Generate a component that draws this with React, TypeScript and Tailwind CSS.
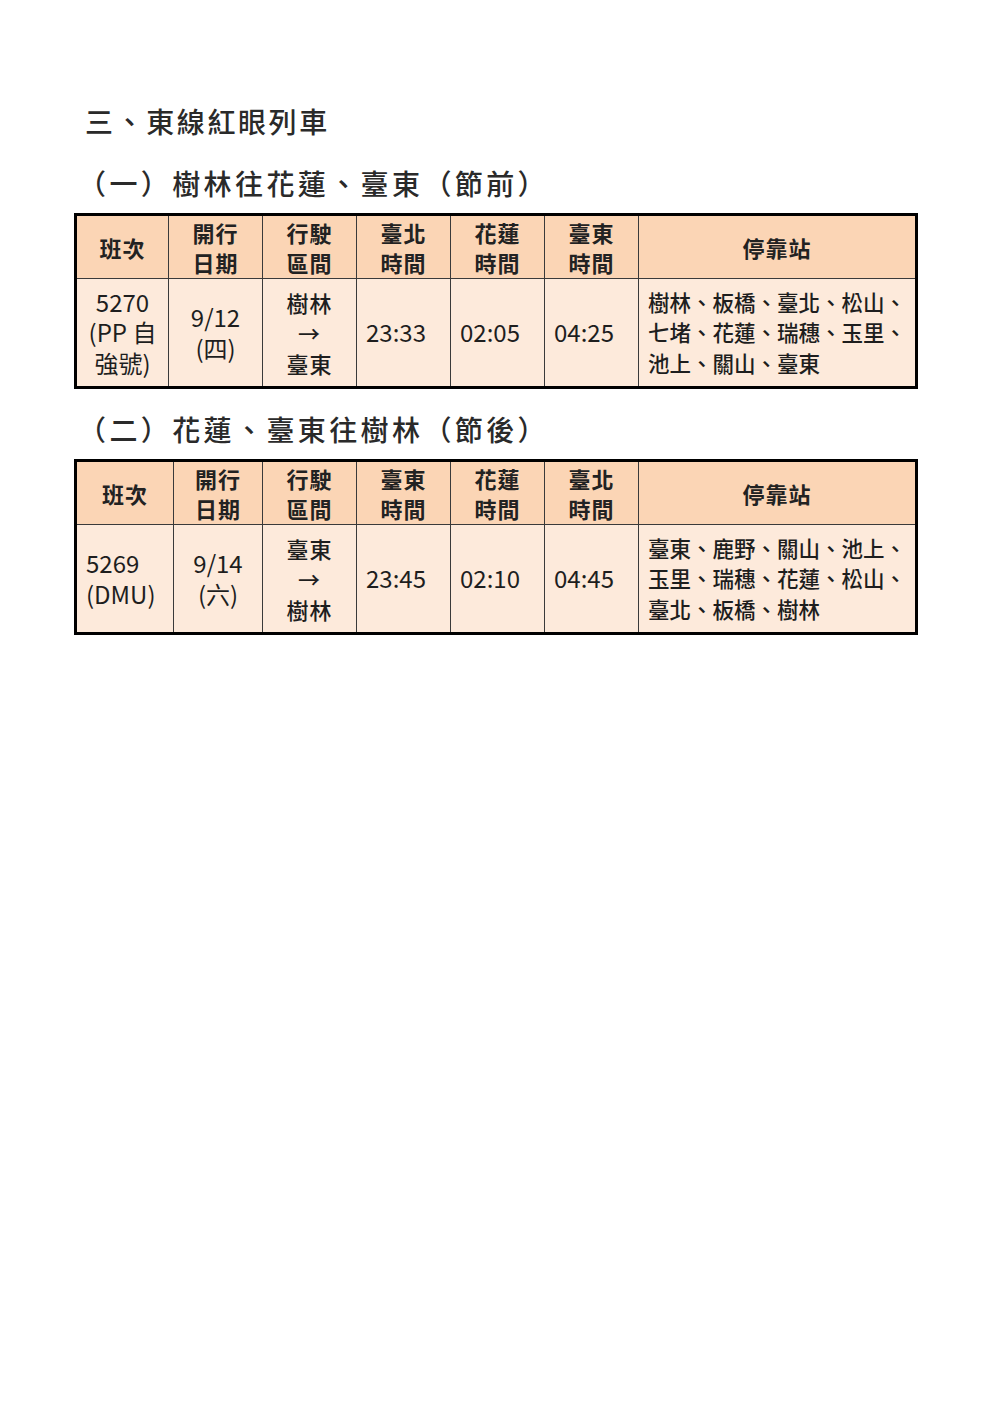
const FONT = { fontFamily: '"Noto Sans CJK TC", "Noto Sans", sans-serif' };

type Row = {
  train: string[];
  trainAlign: 'center' | 'left';
  date: string[];
  route: string[];
  times: string[];
  stops: string[];
};

type Section = {
  title: string;
  timeHeads: string[];
  colWidths: number[];
  row: Row;
};

const sections: Section[] = [
  {
    title: '（一）樹林往花蓮、臺東（節前）',
    timeHeads: ['臺北', '花蓮', '臺東'],
    colWidths: [93, 94, 94, 94, 94, 94, 278],
    row: {
      train: ['5270', '(PP 自', '強號)'],
      trainAlign: 'center',
      date: ['9/12', '(四)'],
      route: ['樹林', '→', '臺東'],
      times: ['23:33', '02:05', '04:25'],
      stops: ['樹林、板橋、臺北、松山、', '七堵、花蓮、瑞穗、玉里、', '池上、關山、臺東'],
    },
  },
  {
    title: '（二）花蓮、臺東往樹林（節後）',
    timeHeads: ['臺東', '花蓮', '臺北'],
    colWidths: [98, 89, 94, 94, 94, 94, 278],
    row: {
      train: ['5269', '(DMU)'],
      trainAlign: 'left',
      date: ['9/14', '(六)'],
      route: ['臺東', '→', '樹林'],
      times: ['23:45', '02:10', '04:45'],
      stops: ['臺東、鹿野、關山、池上、', '玉里、瑞穗、花蓮、松山、', '臺北、板橋、樹林'],
    },
  },
];

function Lines({ lines }: { lines: string[] }) {
  return (
    <>
      {lines.map((l, i) => (
        <div key={i}>{l}</div>
      ))}
    </>
  );
}

function ScheduleTable({ s }: { s: Section }) {
  const th = 'border border-[#3a3a3a] bg-[#fbd5b5] text-center align-middle font-semibold text-[22px] leading-[30px] tracking-[1px] text-[#222]';
  const td = 'border border-[#3a3a3a] bg-[#fdeadb] align-middle leading-[30.5px] text-[#1e1e1e]';
  return (
    <table className="table-fixed border-collapse border-[3px] border-black w-[841px]">
      <colgroup>
        {s.colWidths.map((w, i) => (
          <col key={i} style={{ width: w }} />
        ))}
      </colgroup>
      <thead>
        <tr className="h-[64px]">
          <th className={th}>班次</th>
          <th className={th}>
            <Lines lines={['開行', '日期']} />
          </th>
          <th className={th}>
            <Lines lines={['行駛', '區間']} />
          </th>
          {s.timeHeads.map((h) => (
            <th key={h} className={th}>
              <Lines lines={[h, '時間']} />
            </th>
          ))}
          <th className={th}>停靠站</th>
        </tr>
      </thead>
      <tbody>
        <tr className="h-[109px]">
          <td
            className={`${td} text-[24px] ${s.row.trainAlign === 'center' ? 'text-center' : 'text-left pl-[9px]'}`}
          >
            <Lines lines={s.row.train} />
          </td>
          <td className={`${td} text-[24px] text-center`}>
            <Lines lines={s.row.date} />
          </td>
          <td className={`${td} text-[22px] tracking-[1px] text-center font-medium`}>
            <Lines lines={s.row.route} />
          </td>
          {s.row.times.map((t, i) => (
            <td key={i} className={`${td} text-[24px] pl-[9px]`}>
              {t}
            </td>
          ))}
          <td className={`${td} text-[21.5px] pl-[9px] font-medium`}>
            <Lines lines={s.row.stops} />
          </td>
        </tr>
      </tbody>
    </table>
  );
}

export default function App() {
  return (
    <div className="w-[1002px] h-[1415px] bg-white pt-[102px] pl-[74px]" style={FONT}>
      <h1 className="pl-[11px] text-[28px] leading-[38px] font-medium text-[#2a2a2a] tracking-[2.6px]">三、東線紅眼列車</h1>
      {sections.map((s, i) => (
        <section key={i} className={i === 0 ? 'mt-[24px]' : 'mt-[21px]'}>
          <h2 className="pl-[4px] text-[28px] leading-[38px] font-medium text-[#2a2a2a] tracking-[3.4px] mb-[11px]">
            {s.title}
          </h2>
          <ScheduleTable s={s} />
        </section>
      ))}
    </div>
  );
}
